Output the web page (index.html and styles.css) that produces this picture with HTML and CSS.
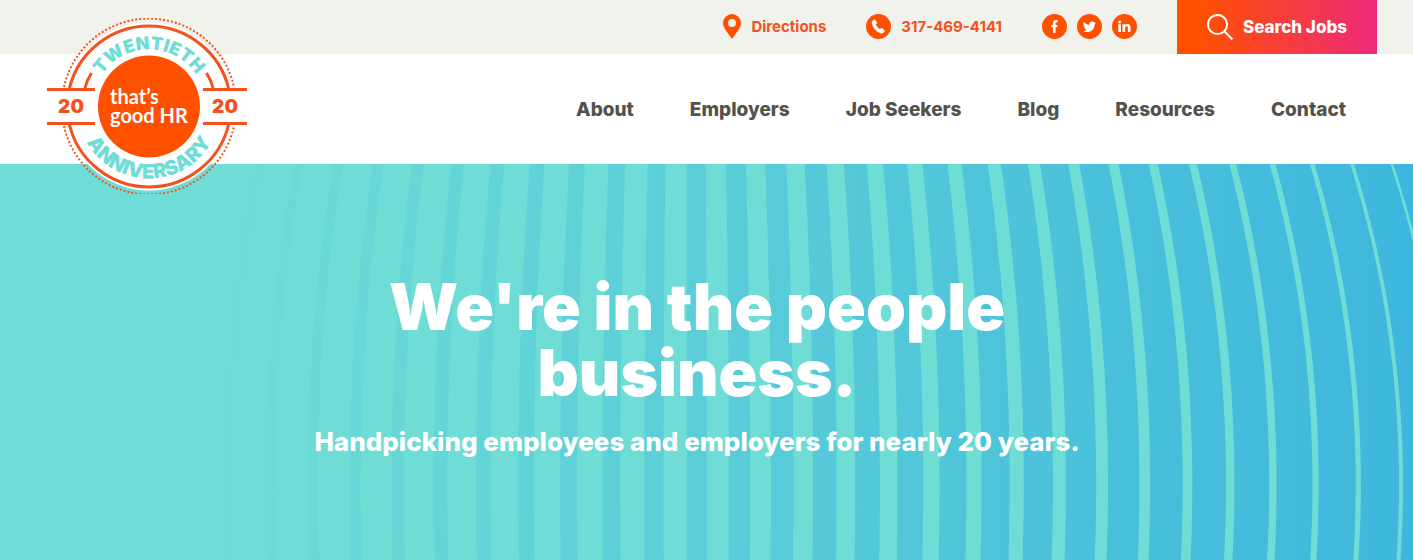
FILE: index.html
```
<!DOCTYPE html>
<html lang="en">

<head>
  <meta charset="UTF-8">
  <meta name="viewport" content="width=device-width, initial-scale=1.0">
  <title>That's Good HR</title>
  <link rel="stylesheet" href="styles.css">
</head>

<body>
  <header class="header">
    <div class="topbar">
      <a class="toplink" href="#directions">
        <svg class="icon-pin" viewBox="0 0 18 25" aria-hidden="true">
          <path fill-rule="evenodd" d="M9 0a9 9 0 0 1 9 9c0 5-5 10-9 16C5 19 0 14 0 9a9 9 0 0 1 9-9zm0 5a4 4 0 1 0 0 8 4 4 0 0 0 0-8z"/>
        </svg>
        <span>Directions</span>
      </a>
      <a class="toplink" href="tel:317-469-4141">
        <svg class="icon-round" viewBox="0 0 25 25" aria-hidden="true">
          <circle cx="12.5" cy="12.5" r="12.5"/>
          <path class="glyph" d="M6.3 7.1l1.6-1.4c.5-.4 1-.3 1.4.2l1.6 2.3c.3.5.2 1-.2 1.3l-1 .9c.8 1.8 2.3 3.5 4.2 4.7l1.2-.8c.5-.3 1-.3 1.4.1l2 1.8c.4.4.4.9 0 1.3l-1.3 1.5c-.5.5-1.2.6-1.9.4-4.8-1.4-8.5-5.5-9.5-10.5-.1-.7 0-1.3.5-1.8z"/>
        </svg>
        <span>317-469-4141</span>
      </a>
      <div class="social">
        <a href="#facebook" aria-label="Facebook">
          <svg class="icon-round" viewBox="0 0 25 25" aria-hidden="true">
            <circle cx="12.5" cy="12.5" r="12.5"/>
            <path class="glyph" d="M11 19v-5.7H9.2v-2.4H11V9.3c0-2.1 1-3.2 3-3.2h1.6v2.4h-1.1c-.7 0-.9.3-.9.9v1.5h2l-.3 2.4h-1.7V19z"/>
          </svg>
        </a>
        <a href="#twitter" aria-label="Twitter">
          <svg class="icon-round" viewBox="0 0 25 25" aria-hidden="true">
            <circle cx="12.5" cy="12.5" r="12.5"/>
            <path class="glyph" d="M19 8.7c-.5.2-1 .4-1.5.4.5-.3 1-.8 1.2-1.400-.5.3-1.1.5-1.7.6a2.7 2.7 0 0 0-4.6 2.4c-2.2-.1-4.2-1.2-5.5-2.8-.7 1.3-.4 2.8.8 3.6-.4 0-.8-.1-1.2-.3 0 1.3.9 2.4 2.2 2.7-.4.1-.8.1-1.2 0 .3 1.100 1.3 1.8 2.500 1.9A5.500 5.500 0 0 1 6 16.900c4.800 3 11.700.4 11.700-6.900.5-.3.900-.8 1.300-1.300z"/>
          </svg>
        </a>
        <a href="#linkedin" aria-label="LinkedIn">
          <svg class="icon-round" viewBox="0 0 25 25" aria-hidden="true">
            <circle cx="12.5" cy="12.5" r="12.5"/>
            <path class="glyph" d="M6.3 10.3h2.6V18H6.3zM10.5 10.3h2.4v1.1c.5-.8 1.3-1.3 2.5-1.3 2.5 0 3.1 1.5 3.1 3.7V18h-2.6v-3.8c0-1-.2-1.9-1.3-1.9s-1.5.8-1.5 1.9V18h-2.6z"/>
            <circle class="glyph" cx="7.6" cy="8" r="1.5"/>
          </svg>
        </a>
      </div>
      <a class="search-jobs" href="#jobs">
        <svg class="icon-search" viewBox="0 0 26 26" aria-hidden="true">
          <circle cx="10.5" cy="10.5" r="9.6"/>
          <path d="M17.4 17.4l8 8"/>
        </svg>
        <span>Search Jobs</span>
      </a>
    </div>

    <nav class="nav">
      <a href="#about">About</a>
      <a href="#employers">Employers</a>
      <a href="#job-seekers">Job Seekers</a>
      <a href="#blog">Blog</a>
      <a href="#resources">Resources</a>
      <a href="#contact">Contact</a>
    </nav>

    <a class="logo" href="#home" aria-label="That's Good HR home">
      <svg viewBox="0 0 200 176">
        <defs>
          <path id="arcTop" d="M45 88.500a57 57 0 0 1 114 0"/>
          <path id="arcBottom" d="M30 88.500a72 72 0 0 0 144 0"/>
        </defs>
        <!-- badge -->
        <circle class="logo-disc" cx="102" cy="88.500" r="84"/>
        <path class="logo-dots" d="M17 69a87 87 0 0 1 170 0M17 108a87 87 0 0 0 170 0"/>
        <path class="logo-line" d="M22 72a82 82 0 0 1 160 0M22 105a82 82 0 0 0 160 0"/>
        <path class="logo-line" d="M38 70q2-8 6.500-15M166 70q-2-8-6.500-15"/>
        <!-- ribbon -->
        <path class="logo-ribbon" d="M0 72h200v33H0z"/>
        <path class="logo-line" d="M0 71.500h48M156 71.500h44M0 105.500h48M156 105.500h44"/>
        <circle class="logo-center" cx="102" cy="88.500" r="51"/>
        <text class="logo-year" x="24" y="95">20</text>
        <text class="logo-year" x="178" y="95">20</text>
        <text class="logo-arc"><textPath href="#arcTop" startOffset="50%">TWENTIETH</textPath></text>
        <text class="logo-arc logo-arc-large"><textPath href="#arcBottom" startOffset="50%">ANNIVERSARY</textPath></text>
        <text class="logo-name" x="63" y="86">that’s</text>
        <text class="logo-name" x="63" y="105">good HR</text>
      </svg>
    </a>
  </header>

  <main class="hero">
    <svg class="hero-stripes" viewBox="0 0 1413 396" preserveAspectRatio="xMidYMid slice" aria-hidden="true">
      <path id="stripes"/>
    </svg>
    <div class="hero-text">
      <h1>We're in the people business.</h1>
      <p>Handpicking employees and employers for nearly 20 years.</p>
    </div>
  </main>

  <script>
    // Curved bands that get thinner towards the right
    const centerX = 690;
    const centerY = 321;
    const radius = 880;
    const spacing = 42.7;

    function edge(x, y) {
      const k = Math.sqrt(1 - Math.pow((y - centerY) / radius, 2));
      return (centerX + (x - centerX) * k).toFixed(1) + " " + y;
    }

    let d = "";
    for (let i = -1; i < 34; i++) {
      const x = 1401 - spacing * i;
      const half = (4 + 1.12 * i) / 2;
      const points = [];
      for (let y = 0; y <= 396; y += 12) {
        points.push(edge(x - half, y));
      }
      for (let y = 396; y >= 0; y -= 12) {
        points.push(edge(x + half, y));
      }
      d += "M" + points.join("L") + "z";
    }
    document.getElementById("stripes").setAttribute("d", d);
  </script>
</body>

</html>
```
FILE: styles.css
```
* {
  box-sizing: border-box;
}

body {
  margin: 0;
  min-height: 100vh;
  display: flex;
  flex-direction: column;
  font-family: Inter, "Open Sans", sans-serif;
  color: #53534c;
}

a {
  color: inherit;
  text-decoration: none;
}

svg {
  display: block;
}

.header {
  position: relative;
  z-index: 2;
  background-color: #fff;
}

.topbar {
  display: flex;
  justify-content: flex-end;
  gap: 40px;
  height: 54px;
  padding-right: 36px;
  background-color: #f2f2ed;
}

.toplink,
.social {
  display: flex;
  align-items: center;
  gap: 10px;
  padding-bottom: 2px;
}

.toplink {
  color: #f4511e;
  font-size: 15px;
  font-weight: 700;
}

.icon-pin {
  width: 18px;
  height: 25px;
  fill: #ff5000;
}

.icon-round {
  width: 25px;
  height: 25px;
  fill: #ff5000;
}

.icon-round .glyph {
  fill: #fff;
}

.search-jobs {
  display: flex;
  align-items: center;
  gap: 10px;
  padding: 0 30px;
  background: linear-gradient(90deg, #ff5000 10%, #ee2a7b);
  color: #fff;
  font-size: 17px;
  font-weight: 800;
}

.icon-search {
  width: 26px;
  height: 26px;
  fill: none;
  stroke: #fff;
  stroke-width: 2;
}

.nav {
  display: flex;
  justify-content: flex-end;
  align-items: center;
  gap: 56px;
  height: 110px;
  padding-right: 67px;
  font-size: 19px;
  font-weight: 800;
}

.logo {
  position: absolute;
  top: 18px;
  left: 47px;
  width: 200px;
}

.logo-disc,
.logo-ribbon {
  fill: #fff;
}

.logo-center {
  fill: #ff5000;
}

.logo-line {
  fill: none;
  stroke: #f4511e;
  stroke-width: 3;
}

.logo-dots {
  fill: none;
  stroke: #f4511e;
  stroke-width: 2;
  stroke-dasharray: 2 2;
}

.logo-year {
  fill: #f4511e;
  font-size: 19px;
  font-weight: 900;
  text-anchor: middle;
}

.logo-arc {
  fill: #6fddd5;
  font-size: 18px;
  font-weight: 900;
  text-anchor: middle;
}

.logo-arc-large {
  font-size: 20px;
}

.logo-name {
  fill: #fff;
  font-family: Lato, sans-serif;
  font-size: 20px;
  font-weight: 700;
}

.hero {
  position: relative;
  flex: 1;
  padding: 110px 19px 102px 0;
  background: linear-gradient(90deg, #6fddd5 14%, #3db7dd);
  color: #fff;
  text-align: center;
}

.hero-stripes {
  position: absolute;
  top: 0;
  left: 0;
  width: 100%;
  height: 100%;
  fill: #6fddd5;
}

.hero-text {
  position: relative;
}

.hero h1 {
  max-width: 780px;
  margin: 0 auto;
  font-size: 64px;
  font-weight: 900;
  line-height: 66px;
}

.hero p {
  margin: 20px 0 0;
  font-size: 26px;
  font-weight: 800;
  line-height: 32px;
}
```
